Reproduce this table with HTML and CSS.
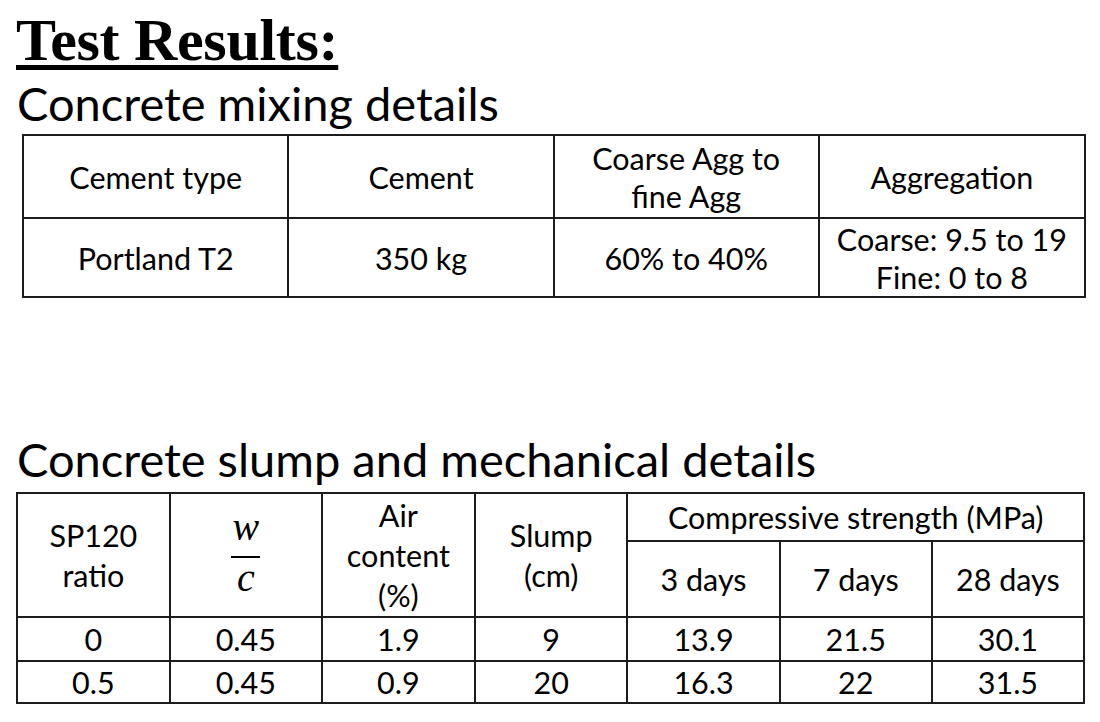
FILE: index.html
```html
<!DOCTYPE html>
<html>
<head>
<meta charset="utf-8">
<link rel="stylesheet" href="styles.css">
</head>
<body>
<div class="page">
  <h1 class="title">Test Results:</h1>
  <h2 class="heading">Concrete mixing details</h2>
  <table class="grid mix">
    <tr class="mix-head">
      <td>Cement type</td>
      <td>Cement</td>
      <td>Coarse Agg to<br>fine Agg</td>
      <td>Aggregation</td>
    </tr>
    <tr class="mix-body">
      <td>Portland T2</td>
      <td>350 kg</td>
      <td>60% to 40%</td>
      <td>Coarse: 9.5 to 19<br>Fine: 0 to 8</td>
    </tr>
  </table>

  <h2 class="heading heading-2">Concrete slump and mechanical details</h2>
  <table class="grid mech">
    <tr class="mech-h1">
      <td rowspan="2">SP120<br>ratio</td>
      <td rowspan="2">
        <div class="frac"><span class="num">w</span><span class="bar"></span><span class="den">c</span></div>
      </td>
      <td rowspan="2">Air<br>content<br>(%)</td>
      <td rowspan="2">Slump<br>(cm)</td>
      <td colspan="3">Compressive strength (MPa)</td>
    </tr>
    <tr class="mech-h2">
      <td>3 days</td>
      <td>7 days</td>
      <td>28 days</td>
    </tr>
    <tr class="mech-r1">
      <td>0</td><td>0.45</td><td>1.9</td><td>9</td><td>13.9</td><td>21.5</td><td>30.1</td>
    </tr>
    <tr class="mech-r2">
      <td>0.5</td><td>0.45</td><td>0.9</td><td>20</td><td>16.3</td><td>22</td><td>31.5</td>
    </tr>
  </table>
</div>
</body>
</html>
```
FILE: styles.css
```css
html, body {
  margin: 0;
  padding: 0;
  background: #ffffff;
  color: #000000;
}

.page {
  padding: 10px 0 0 16px;
  width: 1100px;
  box-sizing: border-box;
}

.title {
  margin: 0;
  font-family: "Liberation Serif", serif;
  font-weight: bold;
  font-size: 60px;
  line-height: 60px;
  text-decoration: underline;
  text-decoration-thickness: 5px;
  text-underline-offset: 5px;
  letter-spacing: -0.3px;
}

.heading {
  margin: 5px 0 0 1px;
  font-family: Lato, "Liberation Sans", sans-serif;
  font-weight: normal;
  font-size: 47px;
  line-height: 56px;
}

.heading-2 {
  margin-top: 133px;
}

.grid {
  border-collapse: collapse;
  font-family: Lato, "Liberation Sans", sans-serif;
  font-size: 30.5px;
}

.grid td {
  border: 2px solid #1c1c1c;
  text-align: center;
  vertical-align: middle;
  padding: 0;
}

.mix {
  margin: 3px 0 0 6px;
  width: 1064px;
}

.mix td {
  width: 266px;
  line-height: 38px;
}

.mix-head td {
  height: 81px;
}

.mix-body td {
  height: 77px;
}

.mech {
  width: 1069px;
  margin-top: 5px;
}

.mech td {
  width: 152px;
  line-height: 40px;
}

.mech-h1 td {
  height: 46px;
}

.mech-h2 td {
  height: 74px;
}

.mech-r1 td {
  height: 42px;
}

.mech-r2 td {
  height: 40px;
}

.frac {
  display: flex;
  flex-direction: column;
  align-items: center;
  padding-bottom: 5px;
  font-family: "Liberation Serif", serif;
  font-style: italic;
  font-size: 40px;
}

.frac .num,
.frac .den {
  display: block;
  line-height: 34px;
}

.frac .bar {
  display: block;
  width: 29px;
  height: 2px;
  background: #000;
  margin: 12px 0 3px;
}
```
